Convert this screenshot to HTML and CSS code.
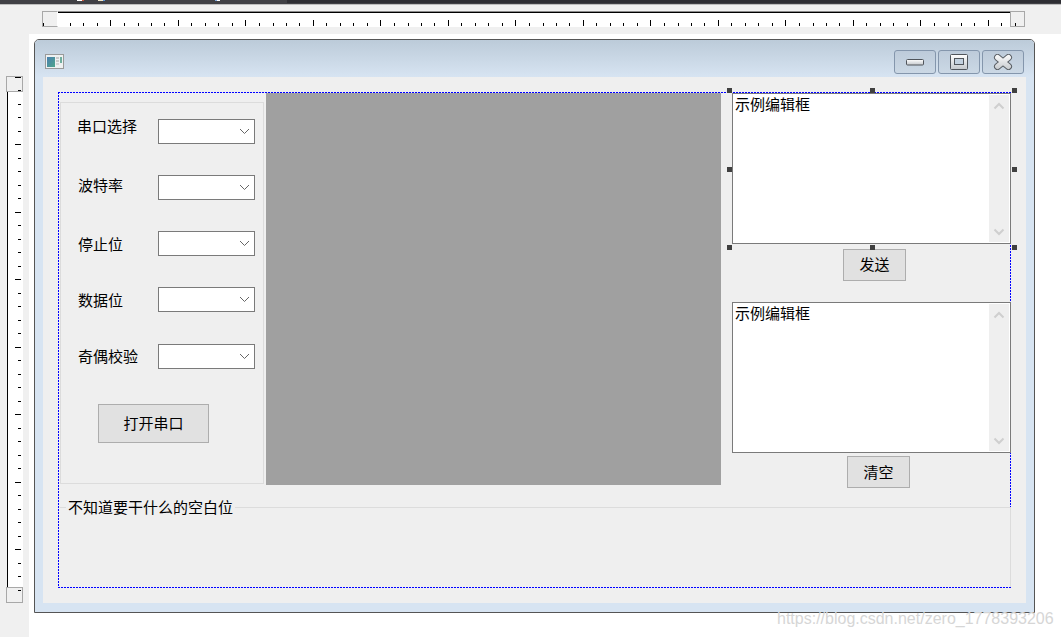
FILE: index.html
```html
<!DOCTYPE html>
<html lang="zh">
<head>
<meta charset="utf-8">
<title>Dialog designer</title>
<link rel="stylesheet" href="styles.css">
</head>
<body>
<div class="page">
  <div class="topbar"></div>
  <div class="hruler">
    <div class="hthumb hthumb-start"></div>
    <svg class="hticks" width="952" height="14">
      <defs>
        <pattern id="ht" x="-15" y="0" width="135" height="14" patternUnits="userSpaceOnUse">
          <path d="M0.500 7v6M13.500 10v3M27.500 10v3M40.500 10v3M54.500 10v3M67.500 7v6M81.500 10v3M95.500 10v3M108.500 10v3M121.500 10v3" stroke="#000" fill="none"/>
        </pattern>
        <linearGradient id="glyph" x1="0" y1="0" x2="0" y2="1">
          <stop offset="0" stop-color="#ffffff"/>
          <stop offset="1" stop-color="#c4c8cc"/>
        </linearGradient>
        <linearGradient id="glyphx" gradientUnits="userSpaceOnUse" x1="0" y1="0" x2="0" y2="16">
          <stop offset="0" stop-color="#ffffff"/>
          <stop offset="1" stop-color="#c4c8cc"/>
        </linearGradient>
        <linearGradient id="thumbnail" x1="0" y1="0" x2="1" y2="1">
          <stop offset="0" stop-color="#4a7fb0"/>
          <stop offset="1" stop-color="#4fa58a"/>
        </linearGradient>
      </defs>
      <rect width="952" height="14" fill="url(#ht)" shape-rendering="crispEdges"/>
    </svg>
    <div class="hthumb hthumb-end"></div>
  </div>
  <div class="main">
    <div class="vruler">
      <div class="vthumb vthumb-start"></div>
      <svg class="vticks" width="15" height="495">
        <defs>
          <pattern id="vt" x="0" y="-15" width="15" height="135" patternUnits="userSpaceOnUse">
            <path d="M7 0.500h6M10 13.500h3M10 27.500h3M10 40.500h3M10 54.500h3M7 67.500h6M10 81.500h3M10 94.500h3M10 108.500h3M10 121.500h3" stroke="#000" fill="none"/>
          </pattern>
        </defs>
        <rect width="15" height="495" fill="url(#vt)" shape-rendering="crispEdges"/>
      </svg>
      <div class="vthumb vthumb-end"></div>
    </div>
    <div class="surface">
      <div class="window">
        <div class="titlebar">
          <svg class="appicon" width="19" height="15" viewBox="0 0 19 15">
            <rect x=".5" y=".5" width="18" height="14" fill="#eef1f1" stroke="#9a9a9a"/>
            <rect x="2" y="3" width="8" height="10" fill="url(#thumbnail)"/>
            <rect x="11" y="3" width="3" height="2" fill="#c9c9c9"/>
            <rect x="11" y="6" width="3" height="2" fill="#c9c9c9"/>
            <rect x="11" y="9" width="3" height="2" fill="#d4d4d4"/>
            <rect x="15" y="3" width="2" height="6" fill="#6fae9f"/>
          </svg>
          <div class="caption-buttons">
            <div class="capbtn">
              <svg width="18" height="7" viewBox="0 0 18 7"><rect x=".5" y=".5" width="17" height="5.500" rx="1" fill="url(#glyph)" stroke="#50555b"/></svg>
            </div>
            <div class="capbtn">
              <svg width="18" height="16" viewBox="0 0 18 16"><rect x=".5" y=".5" width="17" height="15" rx="1" fill="url(#glyph)" stroke="#50555b"/><rect x="4.500" y="4.500" width="9" height="6" fill="#c3d1df" stroke="#50555b"/></svg>
            </div>
            <div class="capbtn">
              <svg width="20" height="16" viewBox="0 0 20 16"><path d="M4.500 3.500 15.500 12.500M15.500 3.500 4.500 12.500" fill="none" stroke="#5a5f65" stroke-width="7" stroke-linecap="round"/><path d="M4.500 3.500 15.500 12.500M15.500 3.500 4.500 12.500" fill="none" stroke="url(#glyphx)" stroke-width="5" stroke-linecap="round"/></svg>
            </div>
          </div>
        </div>
        <div class="frame">
          <div class="client">
            <div class="canvas"></div>
            <div class="groupbox"></div>
            <div class="label l1">串口选择</div>
            <div class="label l2">波特率</div>
            <div class="label l3">停止位</div>
            <div class="label l4">数据位</div>
            <div class="label l5">奇偶校验</div>
            <div class="combo c1"><svg width="11" height="7" viewBox="0 0 11 7"><path d="M1 1 5.500 5.500 10 1" fill="none" stroke="#666"/></svg></div>
            <div class="combo c2"><svg width="11" height="7" viewBox="0 0 11 7"><path d="M1 1 5.500 5.500 10 1" fill="none" stroke="#666"/></svg></div>
            <div class="combo c3"><svg width="11" height="7" viewBox="0 0 11 7"><path d="M1 1 5.500 5.500 10 1" fill="none" stroke="#666"/></svg></div>
            <div class="combo c4"><svg width="11" height="7" viewBox="0 0 11 7"><path d="M1 1 5.500 5.500 10 1" fill="none" stroke="#666"/></svg></div>
            <div class="combo c5"><svg width="11" height="7" viewBox="0 0 11 7"><path d="M1 1 5.500 5.500 10 1" fill="none" stroke="#666"/></svg></div>
            <div class="btn b-open">打开串口</div>
            <div class="graph"></div>
            <div class="edit e1">
              <div class="edit-text">示例编辑框</div>
              <div class="scroll">
                <svg width="12" height="8" viewBox="0 0 12 8"><path d="M1.500 6.500 6 2 10.500 6.500" fill="none" stroke="#cfcfcf" stroke-width="2"/></svg>
                <svg width="12" height="8" viewBox="0 0 12 8"><path d="M1.500 1.500 6 6 10.500 1.500" fill="none" stroke="#cfcfcf" stroke-width="2"/></svg>
              </div>
            </div>
            <div class="btn b-send">发送</div>
            <div class="edit e2">
              <div class="edit-text">示例编辑框</div>
              <div class="scroll">
                <svg width="12" height="8" viewBox="0 0 12 8"><path d="M1.500 6.500 6 2 10.500 6.500" fill="none" stroke="#cfcfcf" stroke-width="2"/></svg>
                <svg width="12" height="8" viewBox="0 0 12 8"><path d="M1.500 1.500 6 6 10.500 1.500" fill="none" stroke="#cfcfcf" stroke-width="2"/></svg>
              </div>
            </div>
            <div class="btn b-clear">清空</div>
            <div class="bottom-group"><span class="bottom-title">不知道要干什么的空白位</span></div>
            <span class="handle h1"></span><span class="handle h2"></span><span class="handle h3"></span>
            <span class="handle h4"></span><span class="handle h5"></span>
            <span class="handle h6"></span><span class="handle h7"></span><span class="handle h8"></span>
          </div>
        </div>
      </div>
    </div>
  </div>
  <div class="watermark">https://blog.csdn.net/zero_1778393206</div>
</div>
</body>
</html>
```
FILE: styles.css
```css
* { box-sizing: border-box; }
html, body { margin: 0; padding: 0; }
body { width: 1061px; height: 637px; overflow: hidden; background: #f0f0f0; font-family: "Noto Sans CJK SC", "Liberation Sans", sans-serif; font-size: 15px; color: #000; }
.page { position: relative; width: 1061px; height: 637px; display: flex; flex-direction: column; }

.topbar {
  height: 5px; flex: none; border-bottom: 1px solid #bdbdbd;
  background:
    linear-gradient(90deg, #fff 0 5px, #c9553c 5px 7px) 77px 0 / 7px 1px no-repeat,
    linear-gradient(90deg, #f0e6c8 0 5px, #5b8fd0 5px 7px) 98px 0 / 7px 1px no-repeat,
    linear-gradient(90deg, #7ea6dc 0 2px, #fff 2px 5px) 215px 0 / 5px 1px no-repeat,
    linear-gradient(#2e2e33, #2e2e33) 287px 0 / 774px 3px no-repeat,
    #404045;
}

.hruler { height: 29px; flex: none; padding: 6px 0 0 42px; display: flex; align-items: flex-start; }
.hthumb { width: 16px; height: 16px; background-color: #f0f0f0; border: 1px solid #a8a8a8; border-right-color: #fff; flex: none; background-repeat: no-repeat; }
.hthumb-start { background-image: linear-gradient(#000, #000), linear-gradient(#000, #000); background-size: 1px 3px, 1px 3px; background-position: 0 11px, 14px 11px; }
.hthumb-end { width: 15px; border-left-color: #a8a8a8; border-right-color: #a8a8a8; background-image: linear-gradient(#000, #000); background-size: 1px 3px; background-position: 4px 11px; }
.hticks { display: block; background: #fff; border-top: 1px solid #000; box-shadow: 0 -1px 0 #8a8a8a; box-sizing: content-box; flex: none; margin-top: 1px; width: 952px; height: 14px; }

.main { flex: 1; display: flex; min-height: 0; }
.vruler { width: 29px; flex: none; padding: 42px 0 0 6px; display: flex; flex-direction: column; }
.vthumb { width: 17px; height: 16px; background-color: #f0f0f0; border: 1px solid #a8a8a8; flex: none; background-repeat: no-repeat; }
.vthumb-start { background-image: linear-gradient(#000, #000), linear-gradient(#000, #000); background-size: 6px 1px, 3px 1px; background-position: 8px 0, 11px 13px; }
.vthumb-end { background-image: linear-gradient(#000, #000), linear-gradient(#000, #000); background-size: 3px 1px, 3px 1px; background-position: 11px 2px, 11px 14px; }
.vticks { display: block; background: #fff; border-left: 1px solid #000; margin-left: 1px; box-sizing: content-box; width: 15px; flex: none; }

.surface { flex: 1; background: #fff; padding: 5px 26px 24px 5px; }
.window { width: 1001px; height: 574px; border: 1px solid #555; border-radius: 5px 5px 0 0; display: flex; flex-direction: column; overflow: hidden; }
.titlebar { height: 37px; flex: none; background: linear-gradient(#bccbd9, #d7e4f2); display: flex; align-items: flex-start; justify-content: space-between; padding: 13px 10px 0 10px; }
.appicon { display: block; margin-top: 1px; }
.caption-buttons { display: flex; gap: 2px; margin-top: -3px; }
.capbtn { width: 42px; height: 24px; border: 1px solid #8496ac; border-radius: 3px; background: linear-gradient(#bdcbda, #cbd8e5); display: flex; align-items: center; justify-content: center; }
.capbtn svg { display: block; }
.frame { flex: 1; min-height: 0; background: #d7e4f2; padding: 0 8px 9px 8px; display: flex; }
.client { position: relative; flex: 1; background: #efefef; }

/* Widgets on the designer canvas: coordinates are relative to the client area (43,77). */
.canvas {
  position: absolute; left: 15px; top: 15px; width: 953px; height: 496px;
  --dot-h: repeating-linear-gradient(90deg, #0000ff 0 2px, #e6e6ff 2px 3px);
  --dot-v: repeating-linear-gradient(180deg, #0000ff 0 2px, #e6e6ff 2px 3px);
  background:
    var(--dot-h) 0 0 / 100% 1px no-repeat,
    var(--dot-h) 0 100% / 100% 1px no-repeat,
    var(--dot-v) 0 0 / 1px 100% no-repeat,
    var(--dot-v) 100% 0 / 1px 100% no-repeat;
}
.groupbox { position: absolute; left: 17px; top: 25px; width: 204px; height: 382px; border: 1px solid #dcdcdc; }
.label { position: absolute; line-height: 20px; white-space: nowrap; }
.l1 { left: 34px; top: 39px; }
.l2 { left: 35px; top: 98px; }
.l3 { left: 35px; top: 157px; }
.l4 { left: 35px; top: 213px; }
.l5 { left: 35px; top: 269px; }
.combo { position: absolute; left: 115px; width: 97px; height: 25px; background: #fff; border: 1px solid #7a7a7a; display: flex; align-items: center; justify-content: flex-end; padding-right: 4px; }
.combo svg { display: block; }
.c1 { top: 42px; }
.c2 { top: 98px; }
.c3 { top: 154px; }
.c4 { top: 210px; }
.c5 { top: 267px; }
.btn { position: absolute; background: #e1e1e1; border: 1px solid #adadad; display: flex; align-items: center; justify-content: center; padding-bottom: 2px; }
.b-open { left: 55px; top: 327px; width: 111px; height: 39px; }
.b-send { left: 800px; top: 172px; width: 63px; height: 32px; padding-bottom: 4px; }
.b-clear { left: 804px; top: 379px; width: 63px; height: 32px; }
.graph { position: absolute; left: 223px; top: 16px; width: 455px; height: 392px; background: #a0a0a0; }
.edit { position: absolute; left: 689px; width: 279px; height: 151px; background: #fff; border: 1px solid #7a7a7a; display: flex; justify-content: space-between; }
.e1 { top: 16px; }
.e2 { top: 225px; }
.edit-text { padding: 0 0 0 2px; line-height: 20px; }
.scroll { width: 20px; margin: 1px 1px 1px 0; background: #efefef; display: flex; flex-direction: column; justify-content: space-between; align-items: center; padding: 7px 0 6px; }
.scroll svg { display: block; }
.bottom-group { position: absolute; left: 17px; top: 430px; width: 951px; height: 80px; border: 1px solid #dcdcdc; border-left: 0; border-bottom: 0; }
.bottom-title { position: absolute; left: 6px; top: -11px; padding: 0 2px; line-height: 20px; background: #efefef; white-space: nowrap; }
.handle { position: absolute; width: 5px; height: 5px; background: #404040; }
.h1 { left: 684px; top: 11px; }
.h2 { left: 827px; top: 11px; }
.h3 { left: 969px; top: 11px; }
.h4 { left: 684px; top: 90px; }
.h5 { left: 969px; top: 90px; }
.h6 { left: 684px; top: 168px; }
.h7 { left: 827px; top: 168px; }
.h8 { left: 969px; top: 168px; }
.watermark { position: absolute; left: 777px; top: 609px; font-family: "Liberation Sans", sans-serif; font-size: 16px; line-height: 20px; color: #d6d6d6; white-space: nowrap; }
```
